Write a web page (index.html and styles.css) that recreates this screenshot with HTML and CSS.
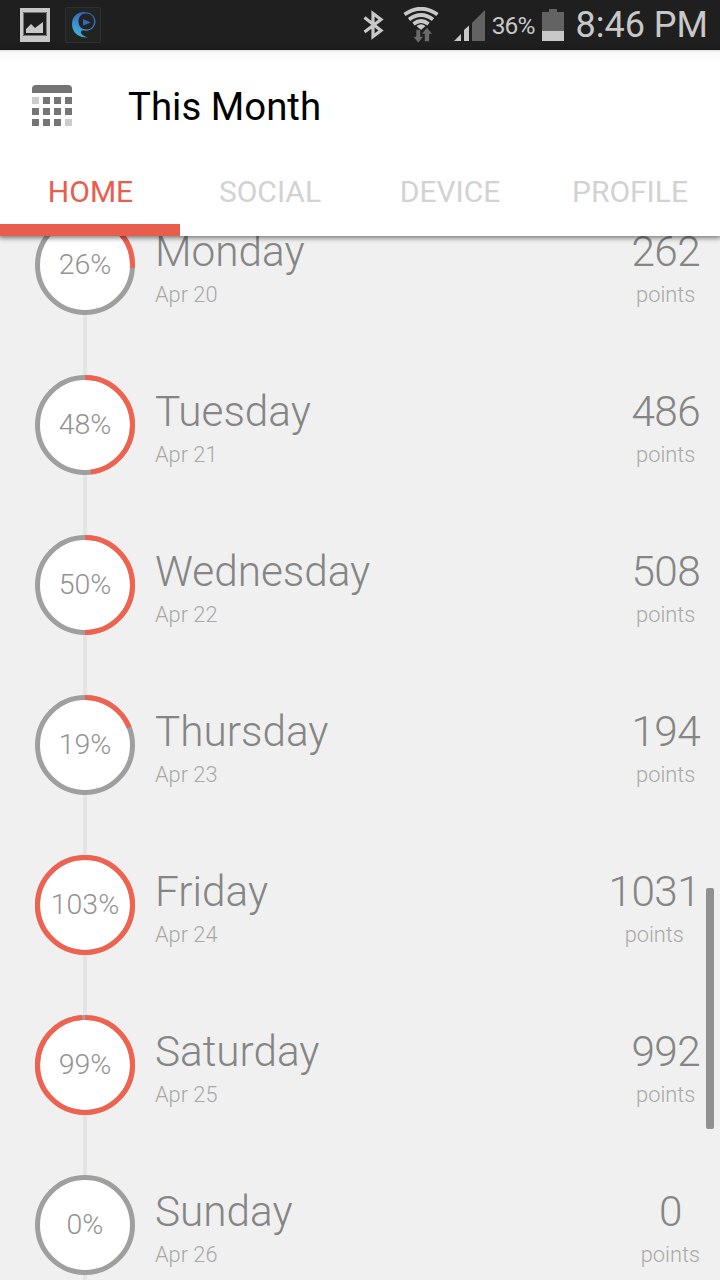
FILE: index.html
```html
<!DOCTYPE html>
<html lang="en">
<head>
    <meta charset="UTF-8">
    <meta name="viewport" content="width=device-width, initial-scale=1.0">
    <title>This Month</title>
    <link rel="stylesheet" href="styles.css">
</head>
<body>
    <!-- Status bar -->
    <div class="status-bar">
        <div class="notifications">
            <svg width="30" height="34" viewBox="0 0 30 34">
                <path fill="#c8c8c8" fill-rule="evenodd" d="M0 0H30V34H0ZM3 4V28H27V4Z"/>
                <path fill="none" stroke="#777" d="M3.5 4.5H26.5V27.5H3.5Z"/>
                <path fill="#c8c8c8" d="M6 25V21L11 16L15 20L23 14V25Z"/>
            </svg>
            <svg width="36" height="36" viewBox="0 0 36 36">
                <defs>
                    <linearGradient id="swirl" x1="0" y1="1" x2="0.5" y2="0">
                        <stop offset="0" stop-color="#3fc4cf"/>
                        <stop offset="0.5" stop-color="#3a8fd2"/>
                        <stop offset="1" stop-color="#355fae"/>
                    </linearGradient>
                </defs>
                <rect x="0.5" y="0.5" width="35" height="35" rx="1.5" fill="#222424" stroke="#303030"/>
                <path fill="url(#swirl)" fill-rule="evenodd" d="M19 5C11 5 7 11 7 17C7 25 13 31 23 30.500C18 29 15.500 27 16 24.500C16.500 23 19 23.800 21 23.800C27 23.500 30.500 19 30.500 14.500C30.500 9 26 5 19 5ZM21 6.500C26 6.500 29 10 29 14.500C29 19 26 22.500 21.500 22.500C16.500 22.500 13.500 19 13.500 14.500C13.500 10 16.500 6.500 21 6.500Z"/>
                <path fill="#3568b8" d="M18 12L26 15.500L18 18.500Z"/>
            </svg>
        </div>
        <div class="indicators">
            <svg class="bluetooth" width="22" height="32" viewBox="0 0 22 32">
                <path fill="none" stroke="#c8c8c8" stroke-width="3.200" d="M2.500 8.500L19 21.500L11 27.500V4.500L19 10.500L2.500 23"/>
            </svg>
            <svg class="wifi" width="36" height="36" viewBox="0 0 36 36">
                <g fill="none" stroke="#c8c8c8" stroke-width="3.800">
                    <path d="M1.500 7.500Q18 -4 34.500 7.500"/>
                    <path d="M6 12.500Q18 3.500 30 12.500"/>
                    <path d="M10.500 17Q18 11 25.500 17"/>
                </g>
                <path fill="#c8c8c8" d="M13.500 19Q18 15.500 22.500 19L18 23Z"/>
                <path fill="#6b6b6b" stroke="#1f1f1f" stroke-width="0.600" d="M13 22.500H17.500V29.500H20.500L15.300 36L10 29.500H13Z"/>
                <path fill="#6b6b6b" stroke="#1f1f1f" stroke-width="0.600" d="M24 20.500L29.500 27H26.500V34.500H21.500V27H18.500Z"/>
            </svg>
            <svg class="signal" width="31" height="31" viewBox="0 0 31 31">
                <path fill="#c8c8c8" d="M0 31L7 24V31ZM10 31V20L15 15.500V31Z"/>
                <path fill="#636363" d="M18 31V13L31 0V31Z"/>
            </svg>
            <span class="battery-level">36%</span>
            <svg class="battery" width="22" height="32" viewBox="0 0 22 32">
                <path fill="#636363" d="M7 0H15V3H22V22H0V3H7Z"/>
                <path fill="#c8c8c8" d="M0 22H22V32H0Z"/>
            </svg>
            <span class="clock">8:46 PM</span>
        </div>
    </div>

    <!-- Title and tabs -->
    <header class="header">
        <div class="title-row">
            <svg width="40" height="41" viewBox="0 0 40 41">
                <path fill="#757575" d="M0 8V4Q0 0 4 0H36Q40 0 40 4V8Z"/>
                <path fill="#757575" d="M11 12h7v7h-7zM22 12h7v7h-7zM33 12h7v7h-7zM0 23h7v7H0zM11 23h7v7h-7zM22 23h7v7h-7zM33 23h7v7h-7zM0 34h7v7H0zM11 34h7v7h-7zM22 34h7v7h-7z"/>
                <path fill="#ccc" d="M0 12h7v7H0zM33 34h7v7h-7z"/>
            </svg>
            <h1>This Month</h1>
        </div>
        <nav class="tabs">
            <a class="tab active">HOME</a>
            <a class="tab">SOCIAL</a>
            <a class="tab">DEVICE</a>
            <a class="tab">PROFILE</a>
        </nav>
    </header>

    <!-- Days, filled in by the script -->
    <main class="timeline">
        <ul class="days" id="days"></ul>
        <div class="scrollbar"></div>
    </main>

    <script>
        const days = [
            { name: 'Monday', date: 'Apr 20', percent: 26, points: 262 },
            { name: 'Tuesday', date: 'Apr 21', percent: 48, points: 486 },
            { name: 'Wednesday', date: 'Apr 22', percent: 50, points: 508 },
            { name: 'Thursday', date: 'Apr 23', percent: 19, points: 194 },
            { name: 'Friday', date: 'Apr 24', percent: 103, points: 1031 },
            { name: 'Saturday', date: 'Apr 25', percent: 99, points: 992 },
            { name: 'Sunday', date: 'Apr 26', percent: 0, points: 0 }
        ];

        // Ring is drawn clockwise from the top, full at 100%
        document.getElementById('days').innerHTML = days.map(day => `
            <li class="day">
                <div class="ring">
                    <svg width="100" height="100" viewBox="0 0 100 100">
                        <circle class="track" cx="50" cy="50" r="47.5"/>
                        <circle class="progress" cx="50" cy="50" r="47.5" pathLength="100" style="stroke-dasharray: ${Math.min(day.percent, 100)} 100"/>
                    </svg>
                    <span class="percent">${day.percent}%</span>
                </div>
                <div class="info">
                    <div class="name">${day.name}</div>
                    <div class="small">${day.date}</div>
                </div>
                <div class="score">
                    <div class="name points">${day.points}</div>
                    <div class="small">points</div>
                </div>
            </li>`).join('');
    </script>
</body>
</html>
```
FILE: styles.css
```css
body {
    font-family: Roboto, sans-serif;
    margin: 0;
    height: 1280px;
    display: flex;
    flex-direction: column;
    overflow: hidden;
    background-color: #f0f0f0;
}
.status-bar {
    height: 50px;
    box-sizing: border-box;
    padding: 0 12px 0 20px;
    display: flex;
    justify-content: space-between;
    align-items: center;
    background-color: #1f1f1f;
    color: #c8c8c8;
}
.notifications {
    display: flex;
    align-items: center;
    gap: 15px;
}
.indicators {
    display: flex;
    align-items: center;
}
.wifi {
    margin-left: 19px;
}
.signal {
    margin-left: 15px;
}
.battery-level {
    margin-left: 7px;
    padding-top: 2px;
    font-size: 24.5px;
    letter-spacing: -0.9px;
    line-height: 48px;
}
.battery {
    margin-left: 7px;
}
.clock {
    margin-left: 12px;
    font-size: 36px;
    line-height: 50px;
}
.header {
    position: relative;
    z-index: 1;
    height: 186px;
    flex: none;
    background: linear-gradient(#ddd, #f8f8f8 2px, #fff 14px);
    box-shadow: 0 1px 5px 1px rgba(0, 0, 0, 0.5);
}
.title-row {
    height: 112px;
    padding-left: 32px;
    display: flex;
    align-items: center;
    gap: 56px;
}
.title-row svg {
    margin-bottom: 2px;
}
h1 {
    margin: 0;
    font-size: 38.4px;
    font-weight: 400;
    color: #000;
}
.tabs {
    display: grid;
    grid-template-columns: repeat(4, 1fr);
}
.tab {
    height: 62px;
    line-height: 59px;
    border-bottom: 12px solid transparent;
    text-align: center;
    font-size: 30px;
    color: #d2d2d2;
}
.tab.active {
    padding-left: 1px;
    color: #e95d4d;
    border-bottom-color: #e95d4d;
}
.timeline {
    position: relative;
    flex: 1;
    min-height: 0;
    overflow: hidden;
}
.days {
    list-style: none;
    margin: -51px 0 0;
    padding: 0;
    /* vertical line behind the rings */
    background: linear-gradient(#e4e4e4, #e4e4e4) 83px 0 / 4px 100% no-repeat;
}
.day {
    height: 160px;
    box-sizing: border-box;
    padding: 0 20px 0 35px;
    display: flex;
    align-items: center;
    gap: 20px;
}
.ring {
    display: grid;
    place-items: center;
    width: 100px;
    height: 100px;
}
.ring svg,
.percent {
    grid-area: 1 / 1;
}
.track {
    fill: #fff;
    stroke: #9f9f9d;
    stroke-width: 5;
}
.progress {
    fill: none;
    stroke: #f1614f;
    stroke-width: 5;
    transform: rotate(-90deg);
    transform-origin: center;
}
.percent {
    padding-bottom: 1px;
    font-size: 28.5px;
    font-weight: 300;
    color: #929292;
}
.info,
.score {
    padding-top: 8px;
}
.info {
    flex: 1;
}
.score {
    text-align: center;
}
.name {
    font-size: 42.3px;
    font-weight: 300;
    line-height: 52px;
    color: #858585;
}
.points {
    letter-spacing: -0.6px;
}
.small {
    font-size: 21.8px;
    font-weight: 300;
    line-height: 34px;
    color: #a8a8a8;
}
.scrollbar {
    position: absolute;
    top: 652px;
    right: 6px;
    width: 8px;
    height: 241px;
    border-radius: 2px;
    background-color: #909090;
}
```
